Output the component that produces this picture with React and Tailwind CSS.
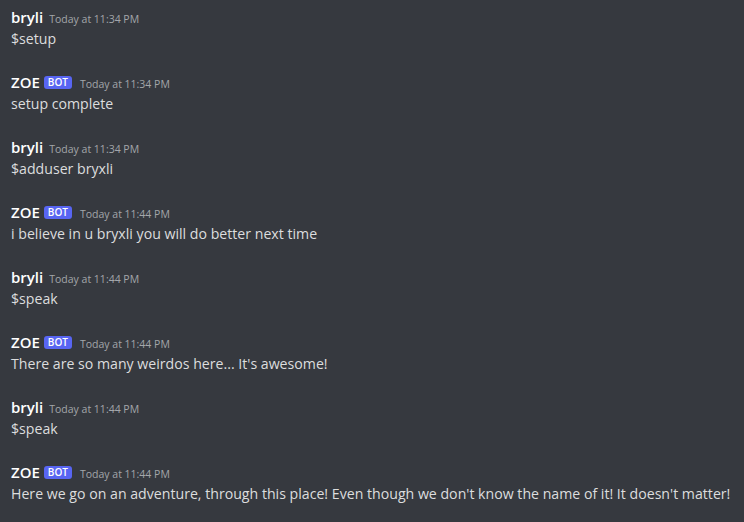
import React from "react";

const messages = [
  { name: "bryli", bot: false, time: "Today at 11:34 PM", text: "$setup" },
  { name: "ZOE", bot: true, time: "Today at 11:34 PM", text: "setup complete" },
  { name: "bryli", bot: false, time: "Today at 11:34 PM", text: "$adduser bryxli" },
  { name: "ZOE", bot: true, time: "Today at 11:44 PM", text: "i believe in u bryxli you will do better next time" },
  { name: "bryli", bot: false, time: "Today at 11:44 PM", text: "$speak" },
  { name: "ZOE", bot: true, time: "Today at 11:44 PM", text: "There are so many weirdos here... It's awesome!" },
  { name: "bryli", bot: false, time: "Today at 11:44 PM", text: "$speak" },
  { name: "ZOE", bot: true, time: "Today at 11:44 PM", text: "Here we go on an adventure, through this place! Even though we don't know the name of it! It doesn't matter!" },
];

export default function App() {
  return (
    <div
      className="w-[744px] h-[522px] bg-[#36393f] overflow-hidden pl-[11px] pt-[6px]"
      style={{ fontFamily: '"Open Sans", "Noto Sans", sans-serif' }}
    >
      {messages.map((m, i) => (
        <div key={i} className="h-[65px]">
          <div className="flex items-baseline h-[22px] leading-[22px]">
            <span className="text-white font-semibold text-[15px]">{m.name}</span>
            {m.bot && (
              <span className="ml-[4px] self-center bg-[#5865f2] text-white text-[10px] font-semibold rounded-[3px] h-[13px] px-[4px] flex items-center leading-none">
                BOT
              </span>
            )}
            <span className={`text-[#a3a6aa] text-[10.5px] ${m.bot ? "ml-[8px]" : "ml-[6px]"}`}>
              {m.time}
            </span>
          </div>
          <div className="text-[#dcddde] text-[14.15px] h-[22px] flex items-center whitespace-nowrap">
            {m.text}
          </div>
        </div>
      ))}
    </div>
  );
}
